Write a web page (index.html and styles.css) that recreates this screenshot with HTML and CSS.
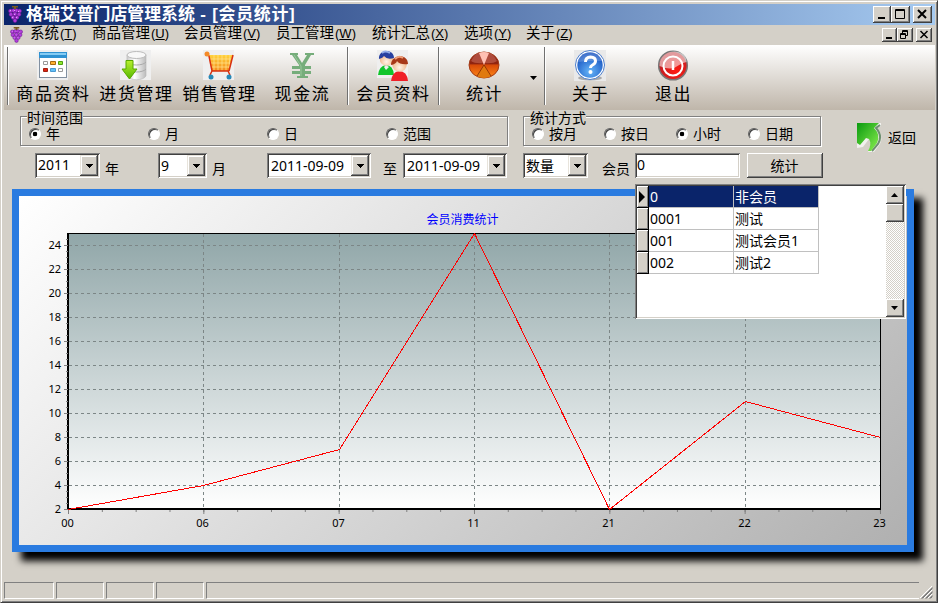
FILE: index.html
```html
<!DOCTYPE html>
<html lang="zh-CN">
<head>
<meta charset="utf-8">
<title>格瑞艾普门店管理系统</title>
<link rel="stylesheet" href="styles.css">
</head>
<body>
<svg class="defs" width="0" height="0">
  <defs>
    <radialGradient id="blue" cx=".5" cy=".75" r=".7"><stop offset="0" stop-color="#66b5f8"/><stop offset="1" stop-color="#1552c0"/></radialGradient>
    <radialGradient id="red" cx=".6" cy=".7" r=".6"><stop offset="0" stop-color="#ff1a10"/><stop offset="1" stop-color="#bf2026"/></radialGradient>
    <linearGradient id="green" x1="0" y1="0" x2="1" y2="1"><stop offset="0" stop-color="#0a9a10"/><stop offset="1" stop-color="#8cf050"/></linearGradient>
    <linearGradient id="lime" x1="0" y1="0" x2="0" y2="1"><stop offset="0" stop-color="#b8f030"/><stop offset="1" stop-color="#55b800"/></linearGradient>
    <linearGradient id="silver"><stop offset="0" stop-color="#ccc"/><stop offset=".4" stop-color="#fff"/><stop offset="1" stop-color="#bbb"/></linearGradient>
    <linearGradient id="cart" x1="0" y1="0" x2="0" y2="1"><stop offset="0" stop-color="#ffd23c"/><stop offset="1" stop-color="#f58a1c"/></linearGradient>
    <linearGradient id="pie" x1="0" y1="0" x2="0" y2="1"><stop offset="0" stop-color="#8a2018"/><stop offset=".45" stop-color="#902410"/><stop offset=".5" stop-color="#d84a08"/><stop offset="1" stop-color="#ff8a18"/></linearGradient>
    <radialGradient id="face" cx=".5" cy=".7" r=".6"><stop offset="0" stop-color="#fff4e8"/><stop offset="1" stop-color="#f0b080"/></radialGradient>
    <symbol id="grape" viewBox="0 0 14 17">
      <g fill="#b23cdc" stroke="#6a1a90" stroke-width=".6"><circle cx="2.400" cy="5" r="1.900"/><circle cx="5.500" cy="4.600" r="1.900"/><circle cx="8.600" cy="4.600" r="1.900"/><circle cx="11.600" cy="5" r="1.900"/><circle cx="3" cy="8.400" r="1.900"/><circle cx="7" cy="8" r="2"/><circle cx="11" cy="8.400" r="1.900"/><circle cx="5" cy="11.400" r="1.900"/><circle cx="9" cy="11.400" r="1.900"/><circle cx="7" cy="14.600" r="1.900"/></g>
      <path d="M2 4h1v1H2zM6 4h1v1H6zM10 5h1v1h-1zM6 8h1v1H6zM4 11h1v1H4zM8 11h1v1H8z" fill="#e59aff"/>
      <path d="M4 0h6v1.500H8V3H6V1.500H4z" fill="#7a5a20"/>
    </symbol>
  </defs>
</svg>
<div class="window">
  <header class="title-bar">
    <svg class="title-icon" width="14" height="19"><use href="#grape"/></svg>
    <h1>格瑞艾普门店管理系统<span class="doc">&nbsp;- [会员统计]</span></h1>
    <div class="caption big">
      <svg width="18" height="17"><path d="M5 11h7v2H5z"/></svg>
      <svg width="19" height="17"><path d="M4.500 3.500h9v9h-9zM4 4.500h10" class="line"/></svg>
      <svg width="19" height="17" class="apart"><path d="M5 4l8 8M13 4l-8 8" class="cross"/></svg>
    </div>
  </header>
  <nav class="menu-bar">
    <svg class="menu-icon" width="13" height="16"><use href="#grape"/></svg>
    <a>系统<i>(<u>T</u>)</i></a><a>商品管理<i>(<u>U</u>)</i></a><a>会员管理<i>(<u>V</u>)</i></a><a>员工管理<i>(<u>W</u>)</i></a><a>统计汇总<i>(<u>X</u>)</i></a><a>选项<i>(<u>Y</u>)</i></a><a>关于<i>(<u>Z</u>)</i></a>
    <div class="caption small">
      <svg width="15" height="14"><path d="M4 9h6v2H4z"/></svg>
      <svg width="16" height="14"><path d="M5.500 5V2.500h5v5H8M5 3.500h6M3.500 5.500h5v5h-5zM3 6.500h6" class="line"/></svg>
      <svg width="16" height="14" class="apart"><path d="M4.500 3l7 7M11.500 3l-7 7" class="cross thin"/></svg>
    </div>
  </nav>
  <div class="toolbar">
    <hr>
    <button class="tool">
      <svg width="32" height="32"><path fill="#efefef" d="M0 1h31v30H0z"/><rect x="2.500" y="3.500" width="27" height="25" fill="#fff" stroke="#8290a0"/><path fill="#2f92d2" d="M2 3h28v6H2z"/><path fill="#85ccf4" d="M3 4h26v2H3z"/><g stroke-width="1"><path fill="#fff" stroke="#999" d="M6.500 12.500h4v3h-4zM21.500 19.500h4v3h-4z"/><path fill="#ffb030" stroke="#a86810" d="M13.500 12.500h5v3h-5z"/><path fill="#90e830" stroke="#50a010" d="M21.500 12.500h4v3h-4z"/><path fill="#e02010" stroke="#a02010" d="M6.500 19.500h4v3h-4z"/><path fill="#60c0f8" stroke="#4898d0" d="M13.500 19.500h5v3h-5z"/></g></svg>
      <span>商品资料</span></button>
    <button class="tool">
      <svg width="32" height="32"><path fill="#efefef" d="M0 1h31v30H0z"/><path fill="url(#silver)" stroke="#bbb" stroke-width=".7" d="M7 6v21c3 5 16 5 19 0V6"/><ellipse cx="16.500" cy="6" rx="9.500" ry="3.500" fill="#f8f8f8" stroke="#bbb"/><path d="M7 13c3 4 16 4 19 0M7 20c3 4 16 4 19 0" fill="none" stroke="#aaa"/><path d="M6 11.500h7V20h4L9.500 30 2 20h4z" fill="url(#lime)" stroke="#58a800"/></svg>
      <span>进货管理</span></button>
    <button class="tool">
      <svg width="32" height="32"><path fill="#efefef" d="M0 1h31v30H0z"/><path d="M6 6h24l-4 16H9z" fill="url(#cart)"/><path d="M7 10h22M8 14h20M9 18h18M11 6v15M15 6v16M19 6v16M23 6v16M27 6l-1 13" stroke="#ffe590" stroke-width=".7" fill="none"/><path d="M3 4l3 3 3 15h17M30 6l-4 16M9 22l-2 4M25 22l2 4" stroke="#d83010" stroke-width="1.500" fill="none"/><circle cx="4" cy="5" r="2.500" fill="#f48a28"/><circle cx="8" cy="28" r="2.500" fill="#2688b8"/><circle cx="26" cy="28" r="2.500" fill="#2688b8"/></svg>
      <span>销售管理</span></button>
    <button class="tool">
      <svg width="32" height="32"><path d="M4 4h8v2h-1l5 8 5-8h-2V4h9v2h-3l-6 10v1h6v3h-6v2h6v3h-6v2h3v2H11v-2h3v-2H6v-3h8v-2H6v-3h7v-1L6 6H4z" fill="#76ad7b"/><path d="M8 6l7 11v10" stroke="#99c79b" fill="none"/></svg>
      <span>现金流</span></button>
    <hr>
    <button class="tool">
      <svg width="32" height="32"><path fill="#efefef" d="M0 1h31v28H0z"/><path d="M1 26q1-9 8-10 7 0 8 10z" fill="#12c52b"/><path d="M9 16l-2 2 2 3 3-3z" fill="#eee"/><circle cx="9.500" cy="10" r="6.800" fill="url(#face)"/><path d="M2 10C1 0 17-1 17 9q-7 2-10-2-1 2-5 3z" fill="#2840a0"/><path d="M5 4q3-3 8 0" stroke="#95aee8" stroke-width="2" fill="none"/><path d="M14 32q1-9 8-10 8 0 9 10z" fill="#f02028"/><circle cx="22.500" cy="15.500" r="7.300" fill="url(#face)"/><path d="M14 16c0-11 17-12 17-1q-8 1-11-3-1 3-6 4z" fill="#a83818"/><path d="M18 10q4-4 8-1" stroke="#efa17a" stroke-width="2" fill="none"/></svg>
      <span>会员资料</span></button>
    <hr>
    <button class="tool">
      <svg width="32" height="32"><ellipse cx="16" cy="16" rx="15" ry="13" fill="url(#pie)" stroke="#a23c1a"/><path d="M16 16L9 27q7 4 14 0z" fill="#e07a10"/><path d="M16 16L11 4q5-2 10 0z" fill="#ffc8bc"/><path d="M3 12Q7 3 16 3q9 0 13 9-4 3-13 2Q7 15 3 12z" fill="#ffb0a0" opacity=".3"/><path d="M16 16L9 27M16 16l7 11" stroke="#702000" fill="none" opacity=".7"/></svg>
      <span>统计</span></button>
    <button class="drop"><svg width="8" height="4"><path d="M0 0h7L3.500 4z"/></svg></button>
    <hr>
    <button class="tool">
      <svg width="32" height="32"><path fill="#e9e9e9" d="M0 1h32v31H0z"/><ellipse cx="16" cy="29" rx="12" ry="2.500" fill="#aaa"/><circle cx="16" cy="16" r="14.500" fill="#fff" stroke="#4b7dcc"/><circle cx="16" cy="16" r="12.700" fill="url(#blue)"/><path d="M4 13C7-1 26 0 28 12q-11-1-24 1z" fill="#fff" opacity=".2"/><path d="M11.500 13q0-5 5-5 5 .2 5 4 0 2.500-3 4-2 1-2 3" fill="none" stroke="#fff" stroke-width="3"/><circle cx="16.500" cy="23" r="2" fill="#fff"/></svg>
      <span>关于</span></button>
    <button class="tool">
      <svg width="32" height="32"><circle cx="16" cy="16.500" r="14.300" fill="url(#red)" stroke="#777" stroke-width="1.500"/><path d="M2.500 17C2-1 30-2 29.500 13q-5 1-9 4-6 5-18 0z" fill="#fff" opacity=".55"/><circle cx="16" cy="17" r="9.500" fill="none" stroke="#fff" stroke-width="2"/><path d="M16 12v9" stroke="#fff" stroke-width="2.500"/></svg>
      <span>退出</span></button>
  </div>

  <main class="workspace">
    <section class="filters">
      <div class="range">
        <fieldset class="radios wide"><legend>时间范围</legend>
          <label><b class="radio on"></b>年</label><label><b class="radio"></b>月</label><label><b class="radio"></b>日</label><label><b class="radio"></b>范围</label>
        </fieldset>
        <div class="fields">
          <div class="combo year">2011<b class="arrow"></b></div><span class="unit u-year">年</span>
          <div class="combo month">9<b class="arrow"></b></div><span class="unit u-month">月</span>
          <div class="combo date">2011-09-09<b class="arrow"></b></div><span class="unit u-to">至</span>
          <div class="combo date">2011-09-09<b class="arrow"></b></div>
        </div>
      </div>
      <div class="mode">
        <fieldset class="radios"><legend>统计方式</legend>
          <label><b class="radio"></b>按月</label><label><b class="radio"></b>按日</label><label><b class="radio on"></b>小时</label><label><b class="radio"></b>日期</label>
        </fieldset>
        <div class="fields">
          <div class="combo kind">数量<b class="arrow"></b></div><span class="unit u-member">会员</span>
          <div class="combo member">0</div>
          <button class="push">统计</button>
        </div>
      </div>
      <a class="back"><svg width="28" height="32"><path d="M1 1h24v3l-4 2q7 8 3 16l-6 8h-6l3-8-2-5-6 8-6 1z" fill="#fff" opacity=".7"/><path d="M24 3l-4 3q7 8 2 16l-6 7" fill="none" stroke="#6f8f70" stroke-width="2"/><path d="M1 1h22l-5 5q7 7 3 15l-6 8h-3q4-7 1-12l-3-1-6 7-3-2z" fill="url(#green)"/></svg>返回</a>
    </section>

    <section class="chart">
      <svg width="888" height="349" viewBox="19 196 888 349">
        <defs>
          <linearGradient id="plot" x1="0" y1="0" x2="0" y2="1"><stop offset="0" stop-color="#90a6a8"/><stop offset="1" stop-color="#fff"/></linearGradient>
        </defs>
        <rect x="67" y="233" width="814" height="276" fill="url(#plot)"/>
        <path class="grid" d="M69 245.500H880M69 269.500H880M69 293.500H880M69 317.500H880M69 341.500H880M69 365.500H880M69 389.500H880M69 413.500H880M69 437.500H880M69 461.500H880M69 485.500H880M203.500 234V508M339.500 234V508M474.500 234V508M609.500 234V508M745.500 234V508"/>
        <path class="frame" d="M67 233.500H880.500V509"/>
        <path class="axis" d="M68 233V509H881"/>
        <path d="M67 239V510" stroke="#808080" stroke-width="2" stroke-dasharray="1 5"/>
        <path d="M65.500 245V510" stroke="#808080" stroke-width="3" stroke-dasharray="1 23"/>
        <path d="M68 511H881" stroke="#808080" stroke-width="2" stroke-dasharray="1 32.830"/>
        <path d="M68 512H881" stroke="#808080" stroke-width="4" stroke-dasharray="1 134.330"/>
        <polyline class="series" points="68,509.500 203.500,485.500 339.500,449.500 474.500,233.500 609.500,509.500 745.500,401.500 880.500,437.500"/>
        <text class="chart-title" x="462.500" y="223.500" textLength="72">会员消费统计</text>
        <g class="y-labels"><text x="61" y="249">24</text><text x="61" y="273">22</text><text x="61" y="297">20</text><text x="61" y="321">18</text><text x="61" y="345">16</text><text x="61" y="369">14</text><text x="61" y="393">12</text><text x="61" y="417">10</text><text x="61" y="441">8</text><text x="61" y="465">6</text><text x="61" y="489">4</text><text x="61" y="513">2</text></g>
        <g class="x-labels"><text x="67.500" y="527">00</text><text x="202.500" y="527">06</text><text x="338.500" y="527">07</text><text x="473.500" y="527">11</text><text x="608.500" y="527">21</text><text x="744.500" y="527">22</text><text x="879.500" y="527">23</text></g>
      </svg>
    </section>

    <div class="lookup">
      <table>
        <tr class="current"><th><svg width="6" height="12"><path d="M0 0l6 6-6 6z"/></svg></th><td>0</td><td>非会员</td></tr>
        <tr><th></th><td>0001</td><td>测试</td></tr>
        <tr><th></th><td>001</td><td>测试会员1</td></tr>
        <tr><th></th><td>002</td><td>测试2</td></tr>
      </table>
      <div class="scroll"><b class="step up"></b><b class="thumb"></b><b class="step down"></b></div>
    </div>
  </main>

  <footer class="status">
    <span></span><span></span><span></span><span></span><span class="rest"></span>
    <svg class="grip" width="14" height="14"><path d="M1 13L13 1M5 13l8-8M9 13l4-4" stroke="#fff"/><path d="M2.500 13.500l11-11M3.500 13.500l10-10M6.500 13.500l7-7M7.500 13.500l6-6M10.500 13.500l3-3M11.500 13.500l2-2" stroke="#808080"/></svg>
  </footer>
</div>
</body>
</html>
```
FILE: styles.css
```css
* { box-sizing: border-box; }
body {
  margin: 0;
  font: 14px/16px "Noto Sans", "Noto Sans CJK SC", sans-serif;
  color: #000;
  background: #d4d0c8;
}
.defs { position: absolute; }
button { font: inherit; color: inherit; padding: 0; border: 0; background: none; }
b, i { font-weight: normal; font-style: normal; }

.window {
  width: 938px;
  height: 603px;
  overflow: hidden;
  display: flex;
  flex-direction: column;
  padding: 3px 2px 2px 3px;
  background: #d4d0c8;
  border: 1px solid;
  border-color: #d4d0c8 #404040 #404040 #d4d0c8;
  box-shadow: inset 1px 1px #fff, inset -1px -1px #808080;
}

.title-bar {
  height: 21px;
  flex: none;
  display: flex;
  align-items: center;
  padding: 0 3px 0 4px;
  background: linear-gradient(90deg, #0a246a, #a6caf0);
}
h1 {
  flex: 1;
  margin: 0 0 0 4px;
  font: bold 16.900px/21px "Liberation Sans", "Noto Sans CJK SC", sans-serif;
  color: #fff;
  white-space: nowrap;
}
.doc { letter-spacing: .75px; }

.caption { display: flex; margin-left: auto; }
.caption svg {
  background: #d4d0c8;
  box-shadow: inset -1px -1px #404040, inset 1px 1px #fff, inset -2px -2px #808080;
}
.caption .apart { margin-left: 3px; }
.caption .line { fill: none; stroke: #000; }
.caption .cross { fill: none; stroke: #000; stroke-width: 2; }
.caption .thin { stroke-width: 1.500; }

.menu-bar {
  height: 20px;
  flex: none;
  display: flex;
  align-items: center;
  padding: 0 3px 0 6px;
}
.menu-icon { margin-right: 7px; }
.menu-bar a {
  width: 92px;
  font: 14.500px/16px "Liberation Sans", "Noto Sans CJK SC", sans-serif;
  white-space: nowrap;
  margin-top: -3px;
}
.menu-bar a:nth-of-type(1), .menu-bar a:nth-of-type(6) { width: 62px; }
.menu-bar a:nth-of-type(4) { width: 96px; }
.menu-bar i { font-size: 13px; margin-left: 1px; }

.toolbar {
  height: 65px;
  flex: none;
  display: flex;
  padding-left: 3px;
  background: linear-gradient(#fff, #bfb6aa);
}
.toolbar hr {
  width: 2px;
  height: 58px;
  margin: 2px 3px 0 3px;
  border: 0;
  border-left: 1px solid #707070;
  border-right: 1px solid #fff;
}
.toolbar hr:first-child { margin-left: 0; }
.tool {
  width: 83px;
  display: flex;
  flex-direction: column;
  align-items: center;
  padding-top: 4px;
}
.tool svg { margin-left: -1px; }
.tool span {
  font: 17px/24px "Noto Sans CJK SC", sans-serif;
  letter-spacing: 1.600px;
  white-space: nowrap;
}
.drop { width: 15px; padding-bottom: 6px; }

.workspace { position: relative; flex: 1; }

.filters { display: flex; height: 79px; padding-left: 16px; }
.range { width: 503px; }
.mode { width: 333px; }
fieldset.radios {
  position: relative;
  display: flex;
  width: 297px;
  height: 30px;
  margin: 6px 0 0;
  padding: 8px 0 0 8px;
  border: 1px solid #808080;
  box-shadow: 1px 1px #fff, inset 1px 1px #fff;
}
fieldset.wide { width: 488px; }
legend {
  position: absolute;
  top: -7px;
  left: 6px;
  padding: 0;
  line-height: 16px;
  background: #d4d0c8;
}
.radios label { display: flex; align-items: center; gap: 5px; width: 72px; height: 19px; margin-top: -1px; }
.wide label { width: 119px; }
.radio {
  width: 12px;
  height: 12px;
  border-radius: 50%;
  border: 1px solid;
  border-color: #606060 #fff #fff #606060;
  background: #fff;
  box-shadow: inset 1px 1px #404040;
}
.radio.on { background: radial-gradient(circle, #000 2px, #fff 2.600px); }

.fields { display: flex; height: 25px; margin-top: 7px; }
.range .fields { padding-left: 15px; }
.combo {
  position: relative;
  height: 25px;
  padding: 2px 0 0 3px;
  line-height: 21px;
  background: #fff;
  box-shadow: inset 1px 1px #808080, inset -1px -1px #fff, inset 2px 2px #404040, inset -2px -2px #d4d0c8;
}
.arrow {
  position: absolute;
  top: 2px;
  right: 2px;
  width: 18px;
  height: 21px;
  background: linear-gradient(#000, #000) 6px 9px / 7px 1px no-repeat, linear-gradient(#000, #000) 7px 10px / 5px 1px no-repeat, linear-gradient(#000, #000) 8px 11px / 3px 1px no-repeat, linear-gradient(#000, #000) 9px 12px / 1px 1px no-repeat, #d4d0c8;
  box-shadow: inset -1px -1px #404040, inset 1px 1px #e8e4dc, inset -2px -2px #808080, inset 2px 2px #fff;
}
.year { width: 65px; }
.month { width: 49px; }
.date { width: 104px; padding-left: 4px; }
.kind { width: 65px; }
.member { width: 105px; padding-left: 2px; }
.year, .member { line-height: 20px; }
.unit { line-height: 32px; }
.u-year { width: 58px; padding-left: 5px; }
.u-month { width: 60px; padding-left: 5px; }
.u-to { width: 32px; padding-left: 12px; }
.u-member { width: 47px; padding-left: 14px; }
.push {
  width: 76px;
  height: 25px;
  margin-left: 7px;
  padding-right: 1px;
  box-shadow: inset -1px -1px #404040, inset 1px 1px #fff, inset -2px -2px #808080;
}
.back { display: flex; align-items: center; gap: 4px; height: 34px; margin-top: 11px; }

.chart {
  width: 902px;
  height: 363px;
  margin-left: 8px;
  border: 7px solid #2a7be0;
  background: linear-gradient(135deg, #fff, #b0b0b0);
  background-origin: padding-box;
  box-shadow: 9px 9px 7px #000;
}
.chart svg { display: block; }
.grid { fill: none; stroke: #7c8686; stroke-dasharray: 3 3; }
.frame { fill: none; stroke: #000; }
.axis { fill: none; stroke: #000; stroke-width: 2; }
.series { fill: none; stroke: #f00; shape-rendering: crispEdges; }
.chart text { font-size: 11px; }
.chart .chart-title { font-size: 12px; fill: #00f; text-anchor: middle; }
.y-labels { text-anchor: end; }
.x-labels { text-anchor: middle; }

.lookup {
  position: absolute;
  left: 631px;
  top: 74px;
  width: 271px;
  height: 135px;
  display: flex;
  justify-content: space-between;
  align-items: flex-start;
  padding: 2px;
  background: #fff;
  box-shadow: inset 1px 1px #808080, inset -1px -1px #fff, inset 2px 2px #404040, inset -2px -2px #d4d0c8;
}
table { border-collapse: separate; border-spacing: 0; }
.lookup th { width: 12px; height: 22px; padding: 0 0 0 2px; background: #d4d0c8; border: solid #000; border-width: 0 1px 1px 0; box-shadow: inset 1px 1px #fff, inset -1px -1px #808080; line-height: 0; text-align: left; }
.lookup td { width: 85px; height: 22px; padding: 0 1px; line-height: 20px; border: solid #c0c0c0; border-width: 0 1px 1px 0; }
.current td { color: #fff; background: #0a246a; }
.scroll {
  width: 18px;
  height: 131px;
  display: flex;
  flex-direction: column;
  background: repeating-conic-gradient(#fff 0 25%, #d4d0c8 0 50%) 0 0 / 2px 2px;
}
.step, .thumb { height: 18px; background-color: #d4d0c8; box-shadow: inset -1px -1px #404040, inset 1px 1px #fff, inset -2px -2px #808080; }
.step::before { content: ""; display: block; width: 7px; height: 4px; margin: 7px 0 0 5px; background: #000; clip-path: polygon(0 0, 100% 0, 50% 100%); }
.step.up::before { clip-path: polygon(0 100%, 100% 100%, 50% 0); }
.step.down { margin-top: auto; }

.status { display: flex; height: 17px; flex: none; gap: 2px; margin-bottom: 1px; }
.status span { width: 48px; height: 17px; border: 1px solid; border-color: #808080 #fff #fff #808080; }
.status span:first-child { width: 50px; }
.status .rest { flex: 1; border-right: 0; margin-right: -2px; }
.grip { margin: 3px 2px 0 0; }
```
